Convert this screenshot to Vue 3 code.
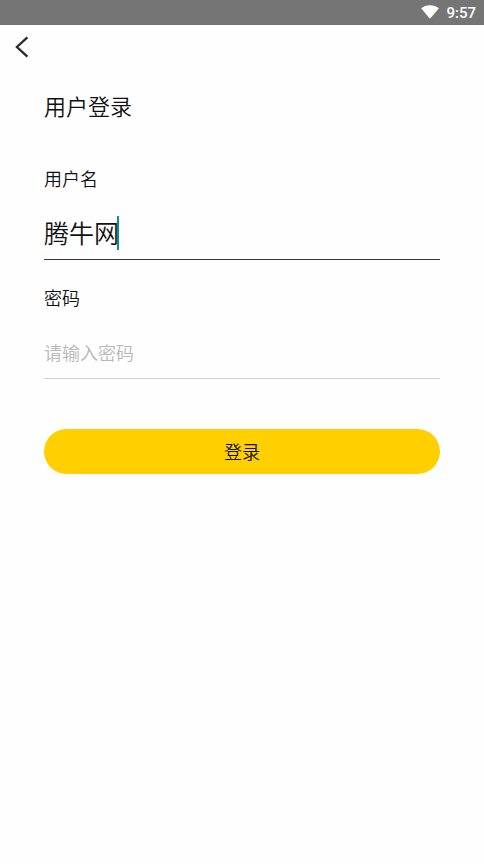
<script setup>
import { ref } from 'vue'

const username = ref('腾牛网')
const password = ref('')
</script>

<template>
  <div class="screen">
    <header class="status">
      <svg class="wifi" viewBox="0 0 18 14" aria-hidden="true">
        <path d="M0.1 3.2C5 -0.9 13 -0.9 17.9 3.2L9.7 13Q9 13.8 8.3 13Z" fill="#fff" />
      </svg>
      <time class="clock">9:57</time>
    </header>
    <nav class="nav">
      <button class="back" type="button" aria-label="返回">
        <svg class="chevron" viewBox="0 0 14 22" aria-hidden="true">
          <path d="M12.4 1.3L1.9 11L12.4 20.7" fill="none" stroke="#2b2b2b" stroke-width="2.3" />
        </svg>
      </button>
    </nav>
    <main class="content">
      <h1 class="title">用户登录</h1>
      <form class="form" @submit.prevent>
        <label class="label" for="username">用户名</label>
        <div class="field active">
          <input id="username" v-model="username" class="input" type="text" autocomplete="off" />
          <span class="cursor" :style="{ left: username.length + 'em' }"></span>
        </div>
        <label class="label" for="password">密码</label>
        <div class="field">
          <input id="password" v-model="password" class="input" type="password" placeholder="请输入密码" />
        </div>
        <button class="submit" type="submit">登录</button>
      </form>
    </main>
  </div>
</template>

<style>
body {
  background: #fefefe;
}
</style>

<style scoped>
.screen {
  min-height: 100vh;
  background: #fefefe;
  color: #111;
  font-family: Roboto, "Noto Sans CJK SC", sans-serif;
  font-weight: 350;
}
.status {
  display: flex;
  align-items: center;
  justify-content: flex-end;
  gap: 7px;
  height: 25px;
  padding-right: 8px;
  background: #757575;
}
.wifi {
  width: 18px;
  height: 14px;
  margin-bottom: 2px;
}
.clock {
  color: #fff;
  font-size: 15px;
  font-weight: 500;
  line-height: 24px;
}
.nav {
  display: flex;
  height: 44px;
}
.back {
  display: flex;
  align-items: center;
  width: 44px;
  padding: 0 0 0 15px;
  border: 0;
  background: none;
}
.chevron {
  width: 14px;
  height: 22px;
}
.content {
  padding: 21px 44px;
}
.title {
  margin: 0 0 44px;
  font-size: 22px;
  font-weight: inherit;
  line-height: 36px;
}
.form {
  display: flex;
  flex-direction: column;
}
.label {
  font-size: 18px;
  line-height: 20px;
}
.field {
  position: relative;
  margin: 15px 0 29px;
  border-bottom: 1px solid #d0d0d0;
  font-size: 25px;
}
.field.active {
  border-color: #333;
}
.input {
  display: block;
  box-sizing: border-box;
  width: 100%;
  height: 54px;
  padding: 0;
  border: 0;
  outline: 0;
  background: none;
  color: inherit;
  font: inherit;
}
.input::placeholder {
  color: #b8b8b8;
  font-size: 18px;
  opacity: 1;
}
.cursor {
  position: absolute;
  top: 11px;
  width: 2px;
  height: 34px;
  margin-left: -2px;
  background: #12907f;
}
.submit {
  height: 45px;
  margin-top: 21px;
  padding: 0 0 1px;
  border: 0;
  border-radius: 23px;
  background: #ffcf00;
  color: #111;
  font-family: inherit;
  font-size: 18px;
  font-weight: inherit;
}
</style>
